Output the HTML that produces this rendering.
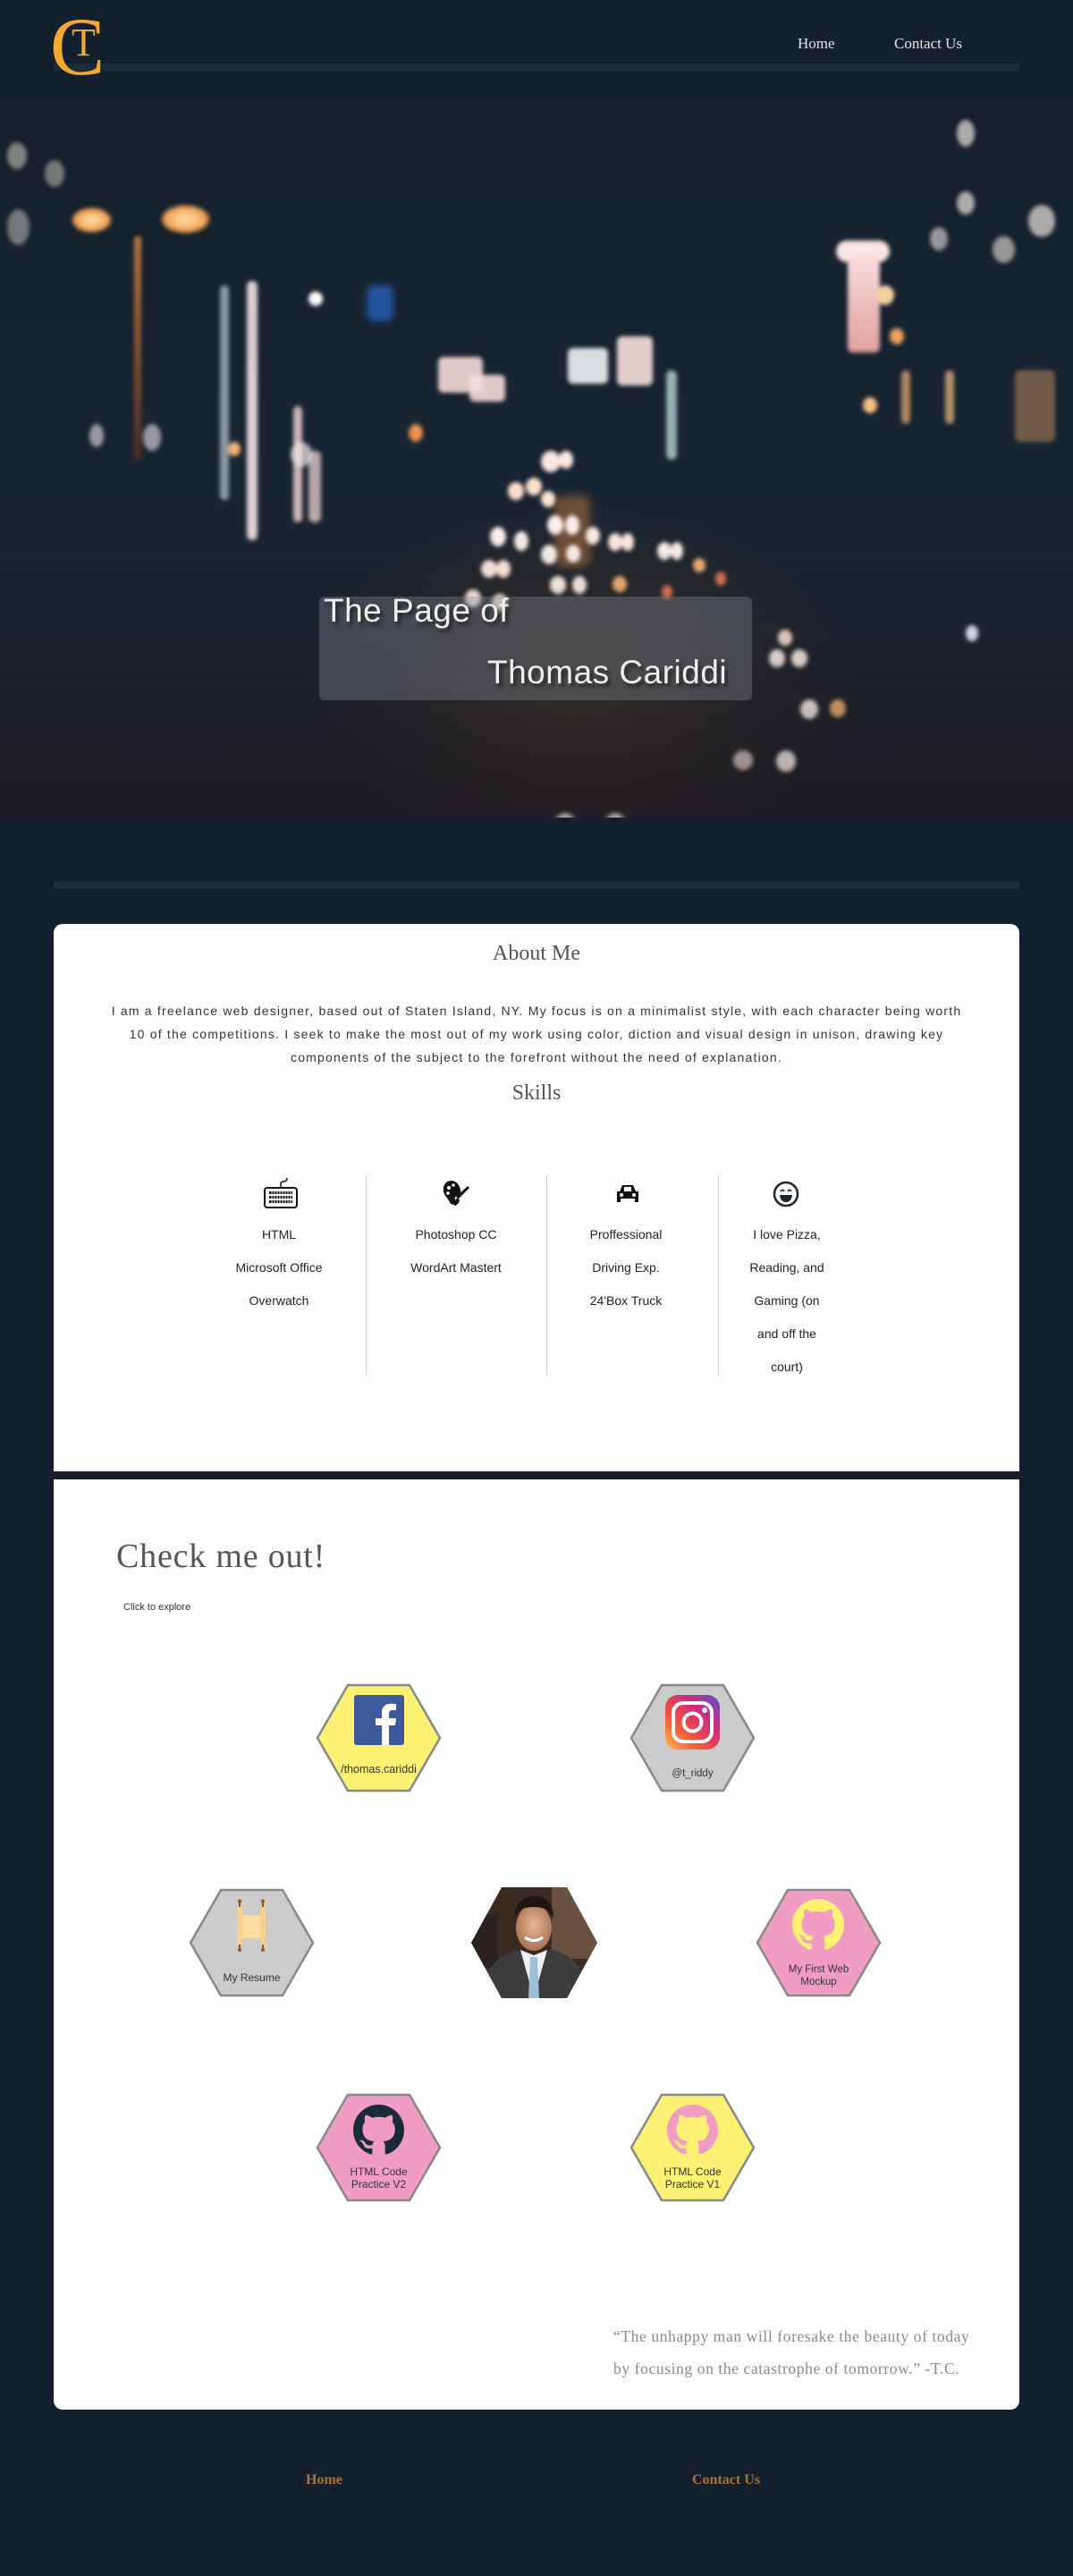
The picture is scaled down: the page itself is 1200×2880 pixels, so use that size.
<!DOCTYPE html>
<html><head><meta charset="utf-8"><style>
*{margin:0;padding:0;box-sizing:border-box}
body{width:1200px;height:2880px;background:#131f2c;position:relative;overflow:hidden;font-family:"Liberation Sans",sans-serif}
.abs{position:absolute}
.bar{position:absolute;left:60px;width:1080px;height:8px;background:#1d2c3a}
.nav{position:absolute;top:39px;font-family:"Liberation Serif",serif;font-size:17px;color:#e6e6e6}
#hero{position:absolute;left:0;top:114px;width:1200px;height:800px;overflow:hidden;
background:radial-gradient(ellipse 300px 200px at 650px 650px,#3a3028,transparent),linear-gradient(180deg,#15202c 0%,#182431 50%,#1e2530 75%,#241f24 100%)}
#bk{position:absolute;left:0;top:0;width:1200px;height:800px;filter:blur(2.5px)}
.b{position:absolute;border-radius:50%}
.card{position:absolute;left:60px;width:1080px;background:#fff}
.skill{position:absolute;top:1362px;width:190px;text-align:center;font-size:14px;line-height:37px;color:#222}
.vl{position:absolute;top:1314px;height:224px;width:1px;background:#ccc}
.hex{position:absolute;width:141px;height:122px}
.hex svg{position:absolute;left:0;top:0}
.ht{position:absolute;left:0;width:141px;text-align:center;font-size:11.5px;color:#333;line-height:14px}
</style></head><body>

<div class="bar" style="top:71px;left:60px"></div>
<div class="abs" style="left:56px;top:6px;font-family:'Liberation Serif',serif;font-size:92px;color:#f5a82e;line-height:92px;z-index:2">C</div>
<div class="abs" style="left:80px;top:26px;font-family:'Liberation Serif',serif;font-size:44px;color:#f5a82e;line-height:44px;z-index:3">T</div>
<div class="nav" style="left:892px">Home</div>
<div class="nav" style="left:1000px">Contact Us</div>

<div id="hero"><div id="bk">
 <div class="b" style="left:80px;top:118px;width:45px;height:28px;background:radial-gradient(#ffe2b0,#f0a050 60%,transparent 75%)"></div>
 <div class="b" style="left:180px;top:115px;width:55px;height:32px;background:radial-gradient(#ffe2b0,#f0a050 60%,transparent 75%)"></div>
 <div class="abs" style="left:150px;top:150px;width:8px;height:250px;background:linear-gradient(#e08a40,#5a3020);border-radius:4px;opacity:.8"></div>
 <div class="abs" style="left:276px;top:200px;width:12px;height:290px;background:#f4e2e6;border-radius:6px;opacity:.9"></div>
 <div class="abs" style="left:246px;top:205px;width:10px;height:240px;background:#d8e8f0;border-radius:5px;opacity:.6"></div>
 <div class="abs" style="left:328px;top:340px;width:10px;height:130px;background:#f8d8dc;border-radius:5px;opacity:.8"></div>
 <div class="abs" style="left:345px;top:390px;width:14px;height:80px;background:#f8e0e0;border-radius:6px;opacity:.7"></div>
 <div class="abs" style="left:935px;top:155px;width:60px;height:24px;background:#fbe6e0;border-radius:12px"></div>
 <div class="abs" style="left:948px;top:170px;width:36px;height:110px;background:linear-gradient(#f8dede,#e2a0a0);border-radius:6px"></div>
 <div class="abs" style="left:410px;top:205px;width:30px;height:40px;background:#2a6ad0;border-radius:8px;opacity:.7;filter:blur(3px)"></div>
 <div class="abs" style="left:490px;top:285px;width:50px;height:40px;background:#f4dcd8;border-radius:6px;opacity:.9"></div>
 <div class="abs" style="left:525px;top:305px;width:40px;height:30px;background:#f4dcd8;border-radius:6px;opacity:.9"></div>
 <div class="abs" style="left:635px;top:275px;width:45px;height:40px;background:#eef4f4;border-radius:6px;opacity:.9"></div>
 <div class="abs" style="left:690px;top:262px;width:40px;height:55px;background:#f8e2de;border-radius:6px;opacity:.9"></div>
 <div class="abs" style="left:745px;top:300px;width:12px;height:100px;background:#cfeee8;border-radius:6px;opacity:.7"></div>
 <div class="abs" style="left:1135px;top:300px;width:45px;height:80px;background:#c89060;border-radius:6px;opacity:.5"></div>
 <div class="abs" style="left:620px;top:440px;width:40px;height:80px;background:#c07840;border-radius:10px;opacity:.5;filter:blur(4px)"></div>
 <div class="b" style="left:8px;top:45px;width:22px;height:30px;background:#e8e2d8;opacity:.5"></div>
 <div class="b" style="left:50px;top:65px;width:22px;height:30px;background:#e8e2d8;opacity:.45"></div>
 <div class="b" style="left:8px;top:120px;width:25px;height:40px;background:#e8e2d8;opacity:.45"></div>
 <div class="b" style="left:1070px;top:20px;width:20px;height:30px;background:#eee6e0;opacity:.7"></div>
 <div class="b" style="left:1070px;top:100px;width:20px;height:26px;background:#eee6e0;opacity:.7"></div>
 <div class="b" style="left:1040px;top:140px;width:20px;height:26px;background:#eee6e0;opacity:.6"></div>
 <div class="b" style="left:1150px;top:115px;width:30px;height:36px;background:#eee6e0;opacity:.7"></div>
 <div class="b" style="left:1110px;top:150px;width:25px;height:30px;background:#eee6e0;opacity:.6"></div>
 <div class="b" style="left:345px;top:212px;width:16px;height:16px;background:#fff"></div>
 <div class="b" style="left:605px;top:390px;width:22px;height:24px;background:#fbe8de"></div>
 <div class="b" style="left:625px;top:390px;width:16px;height:20px;background:#fbe8de"></div>
 <div class="b" style="left:568px;top:425px;width:18px;height:20px;background:#fbe0cc"></div>
 <div class="b" style="left:588px;top:420px;width:18px;height:20px;background:#fbe0cc"></div>
 <div class="b" style="left:605px;top:435px;width:16px;height:18px;background:#fde4d0"></div>
 <div class="b" style="left:612px;top:462px;width:18px;height:22px;background:#fbeee8"></div>
 <div class="b" style="left:632px;top:462px;width:16px;height:22px;background:#fbeee8"></div>
 <div class="b" style="left:548px;top:475px;width:18px;height:22px;background:#fbeee8"></div>
 <div class="b" style="left:575px;top:480px;width:16px;height:22px;background:#fbeee8"></div>
 <div class="b" style="left:605px;top:495px;width:18px;height:22px;background:#fbeee8"></div>
 <div class="b" style="left:633px;top:495px;width:16px;height:20px;background:#fbeee8"></div>
 <div class="b" style="left:655px;top:475px;width:16px;height:20px;background:#fbe8de"></div>
 <div class="b" style="left:680px;top:482px;width:16px;height:20px;background:#fbe8de"></div>
 <div class="b" style="left:695px;top:482px;width:14px;height:20px;background:#fbe8de"></div>
 <div class="b" style="left:735px;top:492px;width:16px;height:20px;background:#fbeee8"></div>
 <div class="b" style="left:750px;top:492px;width:14px;height:20px;background:#fbeee8"></div>
 <div class="b" style="left:538px;top:512px;width:18px;height:20px;background:#fde8dc"></div>
 <div class="b" style="left:555px;top:512px;width:16px;height:20px;background:#fde8dc"></div>
 <div class="b" style="left:615px;top:530px;width:18px;height:20px;background:#fbeee8"></div>
 <div class="b" style="left:640px;top:530px;width:16px;height:20px;background:#fbeee8"></div>
 <div class="b" style="left:520px;top:545px;width:18px;height:20px;background:#fde8dc"></div>
 <div class="b" style="left:550px;top:550px;width:18px;height:20px;background:#fde8dc"></div>
 <div class="b" style="left:685px;top:530px;width:16px;height:18px;background:#f0b070"></div>
 <div class="b" style="left:775px;top:510px;width:14px;height:16px;background:#f0b070"></div>
 <div class="b" style="left:800px;top:525px;width:12px;height:16px;background:#e07050"></div>
 <div class="b" style="left:740px;top:540px;width:12px;height:16px;background:#e07050"></div>
 <div class="b" style="left:325px;top:380px;width:24px;height:28px;background:#f4e6e8;opacity:.7"></div>
 <div class="b" style="left:160px;top:360px;width:20px;height:30px;background:#eee6f0;opacity:.6"></div>
 <div class="b" style="left:100px;top:360px;width:16px;height:26px;background:#eee6f0;opacity:.6"></div>
 <div class="b" style="left:255px;top:380px;width:14px;height:16px;background:#f0b070"></div>
 <div class="b" style="left:457px;top:360px;width:16px;height:20px;background:#e89050"></div>
 <div class="b" style="left:980px;top:205px;width:20px;height:22px;background:#f4d0a0"></div>
 <div class="b" style="left:995px;top:253px;width:16px;height:18px;background:#f0a060"></div>
 <div class="b" style="left:965px;top:330px;width:16px;height:18px;background:#f4c080"></div>
 <div class="abs" style="left:1008px;top:300px;width:10px;height:60px;background:#f0b070;border-radius:5px;opacity:.7"></div>
 <div class="abs" style="left:1057px;top:300px;width:10px;height:60px;background:#f4c080;border-radius:5px;opacity:.7"></div>
 <div class="b" style="left:1080px;top:585px;width:14px;height:18px;background:#eef"></div>
 <div class="b" style="left:860px;top:612px;width:18px;height:20px;background:#fbeee8"></div>
 <div class="b" style="left:885px;top:612px;width:18px;height:20px;background:#fbeee8"></div>
 <div class="b" style="left:870px;top:590px;width:16px;height:18px;background:#fbe0cc"></div>
 <div class="b" style="left:895px;top:668px;width:20px;height:22px;background:#fbeee8"></div>
 <div class="b" style="left:928px;top:668px;width:18px;height:20px;background:#f0b070"></div>
 <div class="b" style="left:868px;top:725px;width:22px;height:24px;background:#fbeee8"></div>
 <div class="b" style="left:820px;top:725px;width:22px;height:22px;background:#fbe8de;opacity:.8"></div>
 <div class="b" style="left:620px;top:795px;width:24px;height:26px;background:#fbeee8"></div>
 <div class="b" style="left:676px;top:795px;width:24px;height:26px;background:#fbeee8"></div>
 <div class="b" style="left:415px;top:840px;width:22px;height:30px;background:#fbeee8"></div>
 <div class="b" style="left:488px;top:843px;width:22px;height:30px;background:#fbeee8"></div>
</div>
 <div class="abs" style="left:0;top:0;width:1200px;height:800px;background:linear-gradient(180deg,transparent 60%,rgba(20,20,30,.35))"></div>
 <div class="abs" style="left:357px;top:553px;width:484px;height:116px;border-radius:6px;background:rgba(130,135,145,.38)"></div>
 <div class="abs" style="left:362px;top:548px;font-size:37px;color:#eef0f0;text-shadow:3px 4px 4px rgba(0,0,0,.55);letter-spacing:0.5px">The Page of</div>
 <div class="abs" style="left:545px;top:617px;font-size:37px;color:#eef0f0;text-shadow:3px 4px 4px rgba(0,0,0,.55);letter-spacing:0.5px">Thomas Cariddi</div>
</div>

<div class="bar" style="top:986px"></div>

<div class="card" style="top:1033px;height:612px;border-radius:10px 10px 0 0">
 <div class="abs" style="left:0;top:20px;width:1080px;text-align:center;font-family:'Liberation Serif',serif;font-size:24px;color:#555">About Me</div>
 <div class="abs" style="left:0;top:84px;width:1080px;text-align:center;font-size:14px;line-height:26px;color:#333;white-space:nowrap;letter-spacing:1.2px">I am a freelance web designer, based out of Staten Island, NY. My focus is on a minimalist style, with each character being worth<br>10 of the competitions. I seek to make the most out of my work using color, diction and visual design in unison, drawing key<br>components of the subject to the forefront without the need of explanation.</div>
 <div class="abs" style="left:0;top:176px;width:1080px;text-align:center;font-family:'Liberation Serif',serif;font-size:24px;color:#555">Skills</div>
</div>
<div class="vl" style="left:409px"></div><div class="vl" style="left:611px"></div><div class="vl" style="left:803px"></div>
<svg class="abs" style="left:294px;top:1316px" width="40" height="36" viewBox="0 0 40 36"><path d="M20 12 V8 Q20 5 23 5 Q27 5 27 1" fill="none" stroke="#111" stroke-width="1.5"/><rect x="2" y="12" width="36" height="22" rx="3" fill="none" stroke="#111" stroke-width="2"/><g fill="#111"><rect x="7" y="16" width="26" height="3"/><rect x="7" y="21" width="26" height="3"/><rect x="7" y="26" width="26" height="3"/></g><g stroke="#fff" stroke-width="1"><path d="M10 15V30M13 15V30M16 15V30M19 15V30M22 15V30M25 15V30M28 15V30M31 15V30"/></g></svg>
<svg class="abs" style="left:493px;top:1318px" width="34" height="34" viewBox="0 0 34 34"><path d="M12 2C5 2 2 8 3 14c1 5 5 8 7 12 1 3 5 4 6 1 1-2-1-4 0-6 1-3 5-2 6-5 1-5-3-14-10-14z" fill="#111"/><circle cx="9" cy="10" r="2" fill="#fff"/><circle cx="14" cy="7" r="1.8" fill="#fff"/><circle cx="8" cy="16" r="1.8" fill="#fff"/><path d="M32 10 L20 22 L17 20 L30 8z" fill="#111"/><path d="M19 21 Q14 24 15 30 Q20 29 21 24z" fill="#111"/></svg>
<svg class="abs" style="left:688px;top:1322px" width="28" height="26" viewBox="0 0 28 26"><path d="M5 10 L8 3 H20 L23 10 H26 V22 H22 V18 H6 V22 H2 V10z" fill="#111"/><rect x="10" y="5" width="8" height="5" fill="#fff"/><circle cx="7" cy="14" r="2" fill="#fff"/><circle cx="21" cy="14" r="2" fill="#fff"/></svg>
<svg class="abs" style="left:864px;top:1320px" width="30" height="30" viewBox="0 0 30 30"><circle cx="15" cy="15" r="13" fill="none" stroke="#1a2633" stroke-width="2.5"/><path d="M9 12 q2-3 4 0 M17 12 q2-3 4 0" stroke="#1a2633" stroke-width="1.8" fill="none"/><path d="M8 16 H22 Q21 24 15 24 Q9 24 8 16z" fill="#1a2633"/></svg>
<div class="skill" style="left:217px">HTML<br>Microsoft Office<br>Overwatch</div>
<div class="skill" style="left:415px">Photoshop CC<br>WordArt Mastert</div>
<div class="skill" style="left:605px">Proffessional<br>Driving Exp.<br>24'Box Truck</div>
<div class="skill" style="left:785px;width:190px;padding:0 48px">I love Pizza, Reading, and Gaming (on and off the court)</div>

<div class="card" style="top:1654px;height:1040px;border-radius:0 0 10px 10px">
 <div class="abs" style="left:70px;top:64px;font-family:'Liberation Serif',serif;font-size:38px;color:#555;letter-spacing:.8px">Check me out!</div>
 <div class="abs" style="left:78px;top:137px;font-size:11px;color:#333">Click to explore</div>
 <div class="abs" style="left:626px;top:940px;font-family:'Liberation Serif',serif;font-size:17.5px;line-height:36px;color:#8a8a8a;white-space:nowrap;letter-spacing:.6px">“The unhappy man will foresake the beauty of today<br>by focusing on the catastrophe of tomorrow.” -T.C.</div>
</div>

<div class="hex" style="left:353px;top:1882px"><svg width="141" height="122"><polygon points="36,2 105,2 139,61 105,120 36,120 2,61" fill="#fdf273" stroke="#888" stroke-width="2.5"/></svg>
 <svg class="abs" style="left:43px;top:13px" width="56" height="56" viewBox="0 0 56 56"><rect width="56" height="56" rx="3" fill="#3b5998"/><path d="M39 56V34h7l1-8h-8v-5c0-2.5 1-4 4-4h4V10c-1 0-3-.3-6-.3-6 0-10 3.5-10 10v6.3h-7v8h7v22z" fill="#fff"/></svg>
 <div class="ht" style="top:89px;font-size:12.5px">/thomas.cariddi</div></div>
<div class="hex" style="left:704px;top:1882px"><svg width="141" height="122"><polygon points="36,2 105,2 139,61 105,120 36,120 2,61" fill="#cbcbcb" stroke="#888" stroke-width="2.5"/></svg>
 <svg class="abs" style="left:40px;top:13px" width="61" height="61" viewBox="0 0 61 61"><defs><linearGradient id="ig" x1="0" y1="1" x2="1" y2="0"><stop offset="0" stop-color="#fdb64a"/><stop offset=".35" stop-color="#f2553c"/><stop offset=".65" stop-color="#d42b7e"/><stop offset="1" stop-color="#5a4fcf"/></linearGradient></defs><rect width="61" height="61" rx="14" fill="url(#ig)"/><rect x="9" y="9" width="43" height="43" rx="11" fill="none" stroke="#fff" stroke-width="4"/><circle cx="30.5" cy="30.5" r="10" fill="none" stroke="#fff" stroke-width="4"/><circle cx="44" cy="17" r="3" fill="#fff"/></svg>
 <div class="ht" style="top:94px">@t_riddy</div></div>

<div class="hex" style="left:211px;top:2111px"><svg width="141" height="122"><polygon points="36,2 105,2 139,61 105,120 36,120 2,61" fill="#cbcbcb" stroke="#888" stroke-width="2.5"/></svg>
 <svg class="abs" style="left:50px;top:12px" width="40" height="60" viewBox="0 0 40 60"><rect x="6" y="18" width="28" height="26" fill="#fcdca0"/><rect x="4" y="8" width="6" height="44" rx="3" fill="#f8d090"/><rect x="30" y="8" width="6" height="44" rx="3" fill="#f8d090"/><g fill="#8a5a20"><rect x="6" y="2" width="2" height="7"/><rect x="32" y="2" width="2" height="7"/><rect x="6" y="51" width="2" height="6"/><rect x="32" y="51" width="2" height="6"/><circle cx="7" cy="2.5" r="2"/><circle cx="33" cy="2.5" r="2"/><circle cx="7" cy="57" r="2"/><circle cx="33" cy="57" r="2"/></g></svg>
 <div class="ht" style="top:93px;font-size:12px">My Resume</div></div>
<div class="hex" style="left:527px;top:2110px"><svg width="141" height="124" viewBox="0 0 141 124"><defs><clipPath id="hc"><polygon points="34,0 107,0 141,62 107,124 34,124 0,62"/></clipPath><radialGradient id="fc" cx=".5" cy=".45" r=".5"><stop offset="0" stop-color="#e8b898"/><stop offset="1" stop-color="#b07a5a"/></radialGradient></defs><g clip-path="url(#hc)"><rect width="141" height="124" fill="#3a2a22"/><rect x="90" y="0" width="51" height="80" fill="#6a5040"/><rect x="0" y="30" width="30" height="60" fill="#2a2220"/><path d="M10 124 Q15 80 50 70 L70 78 L92 70 Q128 80 132 124z" fill="#3c3c3e"/><path d="M55 70 L70 124 L85 70 L70 76z" fill="#eef0f2"/><path d="M66 78 L74 78 L76 124 L64 124z" fill="#9ec0d8"/><ellipse cx="70" cy="45" rx="20" ry="26" fill="url(#fc)"/><path d="M48 35 Q50 10 70 10 Q92 10 92 35 Q88 22 70 22 Q52 22 48 35z" fill="#1e1612"/><path d="M60 56 Q70 63 80 56" stroke="#fff" stroke-width="3" fill="none"/></g></svg></div>
<div class="hex" style="left:845px;top:2111px"><svg width="141" height="122"><polygon points="36,2 105,2 139,61 105,120 36,120 2,61" fill="#f09cc3" stroke="#888" stroke-width="2.5"/></svg>
 <svg class="abs" style="left:41px;top:12px" width="58" height="58" viewBox="0 0 16 16"><path fill="#fdf273" d="M8 0C3.58 0 0 3.58 0 8c0 3.54 2.29 6.53 5.47 7.59.4.07.55-.17.55-.38 0-.19-.01-.82-.01-1.49-2.01.37-2.53-.49-2.69-.94-.09-.23-.48-.94-.82-1.13-.28-.15-.68-.52-.01-.53.63-.01 1.08.58 1.23.82.72 1.21 1.87.87 2.33.66.07-.52.28-.87.51-1.07-1.78-.2-3.64-.89-3.64-3.95 0-.87.31-1.59.82-2.15-.08-.2-.36-1.02.08-2.12 0 0 .67-.21 2.2.82.64-.18 1.32-.27 2-.27.68 0 1.36.09 2 .27 1.53-1.04 2.2-.82 2.2-.82.44 1.1.16 1.92.08 2.12.51.56.82 1.27.82 2.15 0 3.07-1.87 3.75-3.65 3.95.29.25.54.73.54 1.48 0 1.07-.01 1.93-.01 2.2 0 .21.15.46.55.38A8.013 8.013 0 0016 8c0-4.42-3.58-8-8-8z"/></svg>
 <div class="ht" style="top:84px;font-size:11.5px">My First Web<br>Mockup</div></div>

<div class="hex" style="left:353px;top:2340px"><svg width="141" height="122"><polygon points="36,2 105,2 139,61 105,120 36,120 2,61" fill="#f09cc3" stroke="#888" stroke-width="2.5"/></svg>
 <svg class="abs" style="left:42px;top:13px" width="57" height="57" viewBox="0 0 16 16"><path fill="#192a38" d="M8 0C3.58 0 0 3.58 0 8c0 3.54 2.29 6.53 5.47 7.59.4.07.55-.17.55-.38 0-.19-.01-.82-.01-1.49-2.01.37-2.53-.49-2.69-.94-.09-.23-.48-.94-.82-1.130-.28-.15-.68-.52-.01-.53.63-.01 1.08.58 1.23.82.72 1.21 1.87.87 2.33.66.07-.52.28-.87.51-1.07-1.78-.2-3.64-.89-3.64-3.95 0-.87.31-1.59.82-2.15-.08-.2-.36-1.02.08-2.12 0 0 .67-.21 2.2.82.64-.18 1.32-.27 2-.27.68 0 1.36.09 2 .27 1.53-1.04 2.2-.82 2.2-.82.44 1.1.16 1.92.08 2.12.51.56.82 1.27.82 2.15 0 3.07-1.87 3.75-3.65 3.95.29.25.54.73.54 1.48 0 1.07-.01 1.93-.01 2.2 0 .21.15.46.55.38A8.013 8.013 0 0016 8c0-4.42-3.58-8-8-8z"/></svg>
 <div class="ht" style="top:81px;font-size:12px">HTML Code<br>Practice V2</div></div>
<div class="hex" style="left:704px;top:2340px"><svg width="141" height="122"><polygon points="36,2 105,2 139,61 105,120 36,120 2,61" fill="#fdf273" stroke="#888" stroke-width="2.5"/></svg>
 <svg class="abs" style="left:42px;top:13px" width="57" height="57" viewBox="0 0 16 16"><path fill="#f09cc3" d="M8 0C3.58 0 0 3.58 0 8c0 3.54 2.29 6.53 5.47 7.59.4.07.55-.17.55-.38 0-.19-.01-.82-.01-1.49-2.01.37-2.53-.49-2.69-.94-.09-.23-.48-.94-.82-1.13-.28-.15-.68-.52-.01-.53.63-.01 1.08.58 1.23.82.72 1.21 1.87.87 2.33.66.07-.52.28-.87.51-1.07-1.78-.2-3.64-.89-3.64-3.95 0-.87.31-1.59.82-2.15-.08-.2-.36-1.02.08-2.12 0 0 .67-.21 2.2.82.64-.18 1.32-.27 2-.27.68 0 1.36.09 2 .27 1.53-1.04 2.2-.82 2.2-.82.44 1.1.16 1.92.08 2.12.51.56.82 1.27.82 2.15 0 3.07-1.87 3.75-3.65 3.95.29.25.54.73.54 1.48 0 1.07-.01 1.93-.01 2.2 0 .21.15.46.55.38A8.013 8.013 0 0016 8c0-4.42-3.58-8-8-8z"/></svg>
 <div class="ht" style="top:81px;font-size:12px">HTML Code<br>Practice V1</div></div>

<div class="abs" style="left:342px;top:2764px;font-family:'Liberation Serif',serif;font-weight:bold;font-size:16px;color:#a8743c">Home</div>
<div class="abs" style="left:774px;top:2764px;font-family:'Liberation Serif',serif;font-weight:bold;font-size:16px;color:#a8743c">Contact Us</div>
</body></html>
